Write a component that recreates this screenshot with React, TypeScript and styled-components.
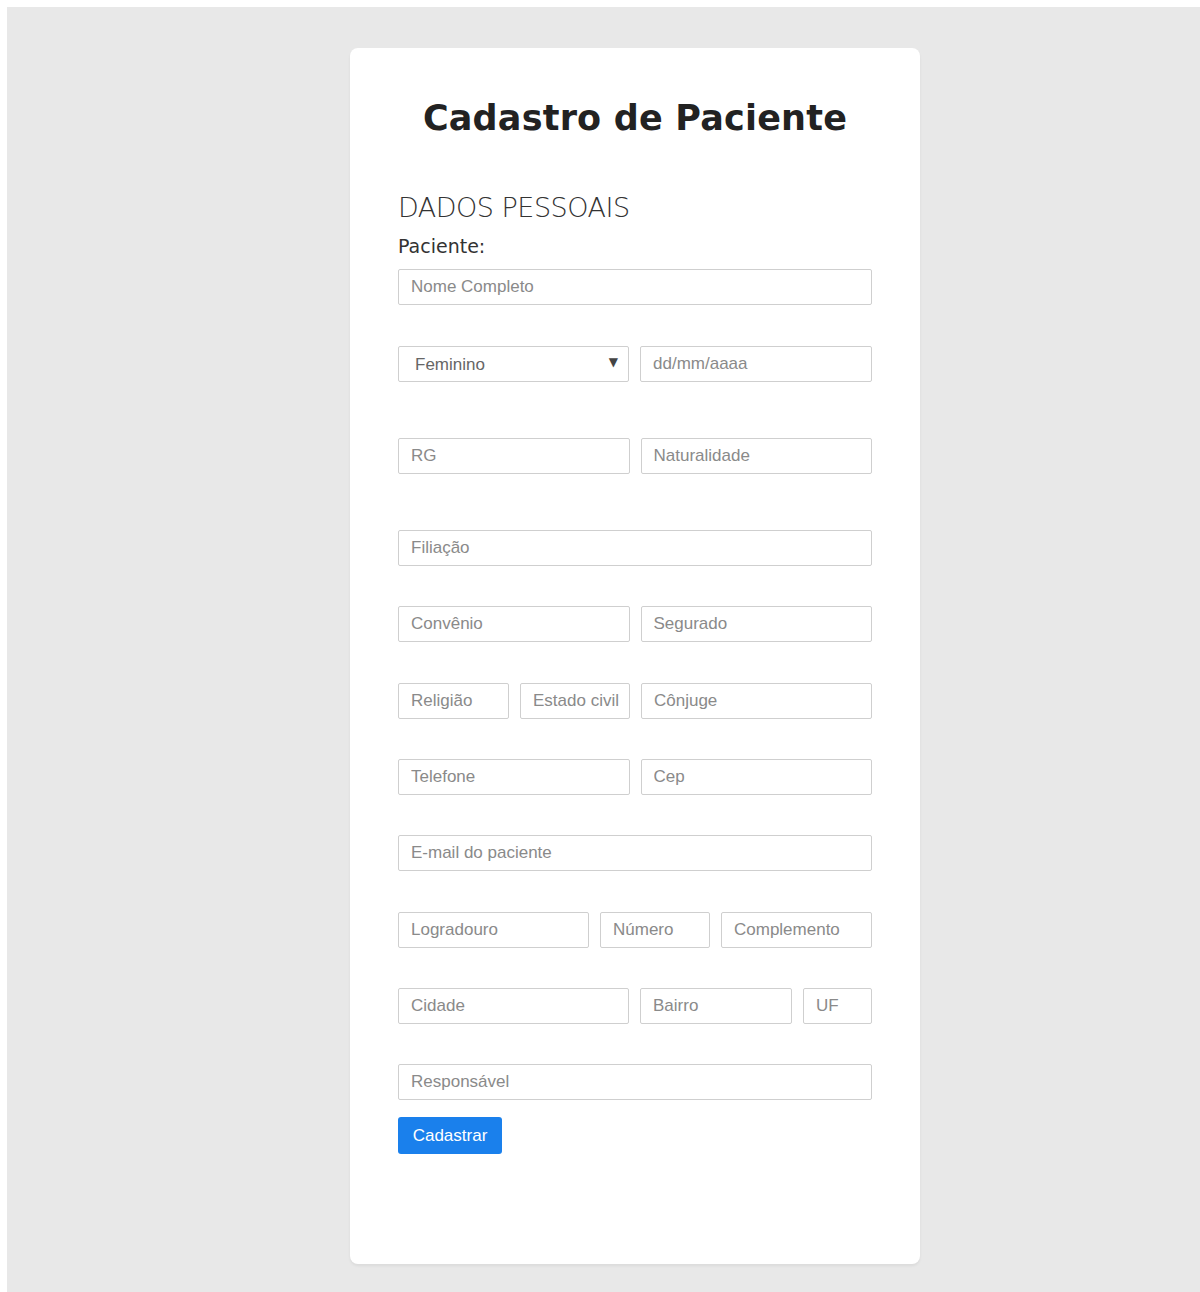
import styled, { createGlobalStyle } from "styled-components";

const GlobalStyle = createGlobalStyle`
  html, body {
    margin: 0;
    padding: 0;
    background: #fff;
  }
  body {
    padding: 7px 0 0 7px;
    font-family: "DejaVu Sans", "Liberation Sans", sans-serif;
  }
`;

const Page = styled.div`
  background: #e8e8e8;
  min-height: 1285px;
  display: flex;
  justify-content: flex-start;
  align-items: flex-start;
  padding: 41px 0 0 343px;
  box-sizing: border-box;
`;

const Card = styled.form`
  width: 570px;
  box-sizing: border-box;
  background: #fff;
  border-radius: 8px;
  box-shadow: 0 2px 3px rgba(0, 0, 0, 0.06);
  padding: 50px 48px 110px;
  display: flex;
  flex-direction: column;
`;

const Title = styled.h1`
  margin: 0 0 54px;
  text-align: center;
  font-size: 35px;
  font-weight: 700;
  color: #222;
  letter-spacing: 0.2px;
`;

const Section = styled.h2`
  margin: 0 0 12px;
  font-size: 27px;
  font-weight: 300;
  color: #333;
  letter-spacing: -0.5px;
`;

const Label = styled.label`
  font-size: 19px;
  color: #333;
  margin-bottom: 12px;
`;

const Row = styled.div<{ $gap?: number }>`
  display: flex;
  gap: 11px;
  margin-bottom: ${(p) => p.$gap ?? 40}px;
`;

const Field = styled.input<{ $w?: number }>`
  box-sizing: border-box;
  flex: ${(p) => (p.$w ? `0 0 ${p.$w}px` : "1 1 0")};
  min-width: 0;
  height: 36px;
  border: 1px solid #cfcfcf;
  border-radius: 2px;
  padding: 0 6px 0 12px;
  font-family: "Liberation Sans", Arial, sans-serif;
  font-size: 17px;
  color: #444;
  background: #fff;
  &::placeholder {
    color: #8a8a8a;
  }
`;

const SelectBox = styled.div`
  position: relative;
  flex: 0 0 231px;
  display: flex;
`;

const Select = styled.select`
  appearance: none;
  box-sizing: border-box;
  width: 100%;
  height: 36px;
  border: 1px solid #cfcfcf;
  border-radius: 2px;
  padding: 0 16px;
  font-family: "Liberation Sans", Arial, sans-serif;
  font-size: 17px;
  color: #666;
  background: #fff;
`;

const Arrow = styled.span`
  position: absolute;
  right: 11px;
  top: 9px;
  font-size: 12px;
  color: #444;
  pointer-events: none;
`;

const Button = styled.button`
  align-self: flex-start;
  width: 104px;
  height: 37px;
  border: none;
  border-radius: 3px;
  background: #1a80ec;
  color: #fff;
  font-family: "Liberation Sans", Arial, sans-serif;
  font-size: 17px;
  cursor: pointer;
`;

export default function App() {
  return (
    <>
      <GlobalStyle />
      <Page>
        <Card onSubmit={(e) => e.preventDefault()}>
          <Title>Cadastro de Paciente</Title>
          <Section>DADOS PESSOAIS</Section>
          <Label>Paciente:</Label>
          <Row $gap={41}>
            <Field placeholder="Nome Completo" />
          </Row>
          <Row $gap={56}>
            <SelectBox>
              <Select defaultValue="f">
                <option value="f">Feminino</option>
                <option value="m">Masculino</option>
              </Select>
              <Arrow>▼</Arrow>
            </SelectBox>
            <Field placeholder="dd/mm/aaaa" />
          </Row>
          <Row $gap={56}>
            <Field placeholder="RG" />
            <Field placeholder="Naturalidade" />
          </Row>
          <Row>
            <Field placeholder="Filiação" />
          </Row>
          <Row $gap={41}>
            <Field placeholder="Convênio" />
            <Field placeholder="Segurado" />
          </Row>
          <Row>
            <Field $w={111} placeholder="Religião" />
            <Field $w={110} placeholder="Estado civil" />
            <Field placeholder="Cônjuge" />
          </Row>
          <Row>
            <Field placeholder="Telefone" />
            <Field placeholder="Cep" />
          </Row>
          <Row $gap={41}>
            <Field placeholder="E-mail do paciente" />
          </Row>
          <Row>
            <Field $w={191} placeholder="Logradouro" />
            <Field $w={110} placeholder="Número" />
            <Field placeholder="Complemento" />
          </Row>
          <Row>
            <Field $w={231} placeholder="Cidade" />
            <Field $w={152} placeholder="Bairro" />
            <Field placeholder="UF" />
          </Row>
          <Row $gap={17}>
            <Field placeholder="Responsável" />
          </Row>
          <Button type="submit">Cadastrar</Button>
        </Card>
      </Page>
    </>
  );
}
